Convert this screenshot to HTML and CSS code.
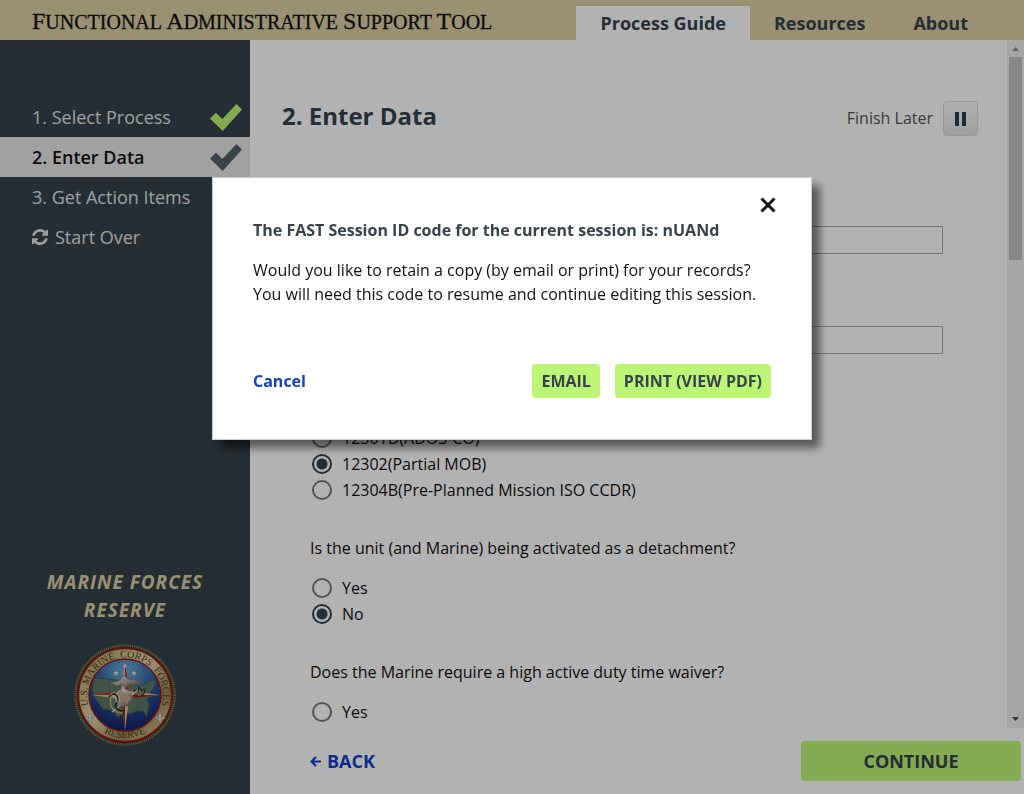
FILE: index.html
```html
<!DOCTYPE html>
<html lang="en">
<head>
<meta charset="utf-8">
<meta name="viewport" content="width=device-width, initial-scale=1">
<title>Functional Administrative Support Tool</title>
<link rel="stylesheet" href="styles.css">
</head>
<body>
<header class="topbar">
  <div class="brand"><span class="cap">F</span>unctional <span class="cap">A</span>dministrative <span class="cap">S</span>upport <span class="cap">T</span>ool</div>
  <nav class="tabs">
    <a class="tab tab-active" href="#guide">Process Guide</a>
    <a class="tab" href="#resources">Resources</a>
    <a class="tab" href="#about">About</a>
  </nav>
</header>
<div class="layout">
  <aside class="sidebar">
    <nav class="steps">
      <a class="step" href="#select">1. Select Process
        <svg class="check check-done" viewBox="0 0 32 27" aria-hidden="true"><path d="M0 14.500 6 8.700 12.300 15 26.500 0 32 5.500 12.700 27Z"/></svg></a>
      <a class="step step-active" href="#enter">2. Enter Data
        <svg class="check" viewBox="0 0 32 27" aria-hidden="true"><path d="M0 14.500 6 8.700 12.300 15 26.500 0 32 5.500 12.700 27Z"/></svg></a>
      <a class="step" href="#items">3. Get Action Items</a>
      <a class="step step-restart" href="#restart"><svg class="refresh" viewBox="0 0 1536 1536" aria-hidden="true"><path d="M1511 928q0 5-1 7-64 268-268 434.500T764 1536q-146 0-282.500-55T238 1324l-129 129q-19 19-45 19t-45-19-19-45V960q0-26 19-45t45-19h448q26 0 45 19t19 45-19 45l-137 137q71 66 161 102t187 36q134 0 250-65t186-179q11-17 53-117 8-23 30-23h192q13 0 22.500 9.500t9.500 22.500zm25-800v448q0 26-19 45t-45 19h-448q-26 0-45-19t-19-45 19-45l138-138Q969 256 768 256q-134 0-250 65T332 500q-11 17-53 117-8 23-30 23H50q-13 0-22.500-9.500T18 608v-7q65-268 270-434.500T768 0q146 0 284 55.500T1297 212l130-129q19-19 45-19t45 19 19 45z"/></svg>Start Over</a>
    </nav>
    <div class="unit">
      <p class="unit-name">MARINE FORCES RESERVE</p>
      <svg class="seal" viewBox="0 0 102 102" role="img" aria-label="U.S. Marine Corps Forces Reserve seal">
        <defs>
          <radialGradient id="sky" cx=".5" cy=".15" r=".85"><stop offset="0" stop-color="#6eb0e0"/><stop offset=".5" stop-color="#285b9c"/><stop offset="1" stop-color="#151f66"/></radialGradient>
          <linearGradient id="gold" x1="0" y1="0" x2="1" y2="1"><stop offset="0" stop-color="#a3935f"/><stop offset=".25" stop-color="#c5b880"/><stop offset=".45" stop-color="#e0d7a6"/><stop offset=".7" stop-color="#9c8658"/><stop offset="1" stop-color="#e0d49e"/></linearGradient>
          <linearGradient id="metal" x1="0" y1="0" x2="1" y2="1"><stop offset="0" stop-color="#fff"/><stop offset=".5" stop-color="#b3aaa6"/><stop offset="1" stop-color="#574536"/></linearGradient>
          <path id="arc-top" d="M14.500 62A38 38 0 1 1 87.500 62"/>
          <path id="arc-bottom" d="M21 82A43.500 43.500 0 0 0 81 82"/>
          <path id="star" d="M0-4 1-1.200 4-1.200 1.600.600 2.500 3.500 0 1.700-2.500 3.500-1.600.600-4-1.200-1-1.200Z"/>
          <path id="lily" d="M0-5C3-2 1 0 1 1 3-3 5-1 4 1L1 2 2 5 0 4-2 5-1 2-4 1C-5-1-3-3-1 1-1 0-3-2 0-5Z"/>
        </defs>
        <circle cx="51" cy="51" r="49.500" fill="#3c3522" stroke="#8f8555" stroke-width="2.500" stroke-dasharray="1.200 1"/>
        <circle cx="51" cy="51" r="46.500" fill="url(#gold)" stroke="#a3141a" stroke-width="1.500"/>
        <circle cx="51" cy="51" r="36" fill="url(#sky)" stroke="#9c171c" stroke-width="1.500"/>
        <path d="M20 34 35 35 47 37 58 39 66 43 72 39 78 36 82 37 80 43 76 49 73 54 75 60 73 73 69 67 62 67 57 70 51 69 44 73 39 67 29 65 21 54 18 44Z" fill="#5f7769" stroke="#42594d"/>
        <path d="M25 35 27 63M35 35 36 66M46 37 46 69M64 43 64 67M20 48H75" stroke="#556e61" stroke-width=".7"/>
        <path d="M51 17 55 47 86 51 55 55 51 86 47 55 17 51 47 47Z" fill="#d9c58f"/>
        <path d="M51 17V51L55 47ZM86 51H51L55 55ZM51 86V51L47 55ZM17 51H51L47 47Z" fill="#a12a20"/>
        <path d="M34 40 46 36 50 31 54 35 68 37 65 39 67 40 60 41 56 40 52 44 47 40 43 42 40 40Z" fill="url(#metal)" stroke="#6c6767" stroke-width=".6"/>
        <path d="M38 51C34 61 37 67 48 69" fill="none" stroke="#cbb073" stroke-width="1.500"/>
        <path d="M60 46 64 48 65 43 68 47 71 45 70 50 66 53 61 51Z" fill="#8e795a" stroke="#30271f"/>
        <path d="M38 68 64 46" stroke="#d9d4cc" stroke-width="1.200"/>
        <circle cx="50" cy="54" r="9" fill="url(#metal)"/>
        <path d="M46 46C51 48 48 51 54 50L57 55 53 60 49 57 45 60 42 53Z" fill="#b9a98a"/>
        <path d="M35 53Q40 47 43 52T42 60Q40 67 51 67" fill="none" stroke="#302417" stroke-width="1.500"/>
        <path d="M36 51Q41 46 44 51T43 59" fill="none" stroke="#e4ddd0" stroke-width="1"/>
        <g fill="#d9e5ee" stroke="#4e6170" stroke-width=".5"><use href="#star" x="51" y="22"/><use href="#star" x="42" y="29"/><use href="#star" x="60" y="29"/></g>
        <g fill="#e3e1dc" stroke="#807d76" stroke-width=".5"><use href="#lily" x="16" y="74"/><use href="#lily" x="86" y="74"/></g>
        <g class="seal-text"><text><textPath href="#arc-top" startOffset="50%" text-anchor="middle">U.S. MARINE&#160; CORPS&#160; FORCES</textPath></text>
        <text><textPath href="#arc-bottom" startOffset="50%" text-anchor="middle">RESERVE</textPath></text></g>
      </svg>
    </div>
  </aside>
  <main class="content">
    <div class="viewport">
      <div class="scroll-body">
        <div class="page-head">
          <h1 class="title">2. Enter Data</h1>
          <label class="finish-label" for="finish">Finish Later</label>
          <button class="pause" id="finish" type="button"><svg class="pause-icon" viewBox="0 0 12 14" aria-hidden="true"><path d="M0 0h4v14H0zM7 0h4v14H7z"/></svg></button>
        </div>
        <form class="form">
          <div class="fields">
            <input class="field" type="text" aria-label="First entry">
            <input class="field" type="text" aria-label="Second entry">
          </div>
          <fieldset class="group" aria-label="Orders type">
            <label class="option"><input class="radio" type="radio" name="orders">12301D(ADOS-CO)</label>
            <label class="option"><input class="radio" type="radio" name="orders" checked>12302(Partial MOB)</label>
            <label class="option"><input class="radio" type="radio" name="orders">12304B(Pre-Planned Mission ISO CCDR)</label>
          </fieldset>
          <fieldset class="group">
            <legend class="question">Is the unit (and Marine) being activated as a detachment?</legend>
            <label class="option"><input class="radio" type="radio" name="detachment">Yes</label>
            <label class="option"><input class="radio" type="radio" name="detachment" checked>No</label>
          </fieldset>
          <fieldset class="group">
            <legend class="question">Does the Marine require a high active duty time waiver?</legend>
            <label class="option"><input class="radio" type="radio" name="waiver">Yes</label>
          </fieldset>
        </form>
      </div>
      <div class="scrollbar" aria-hidden="true">
        <svg class="arrow" viewBox="0 0 17 17"><path d="M5 11h7L8.500 7z" fill="#8b8b8b"/></svg>
        <div class="track"><div class="thumb"></div></div>
        <svg class="arrow" viewBox="0 0 17 17"><path d="M5 6h7l-3.500 4z" fill="#505050"/></svg>
      </div>
    </div>
    <div class="actions">
      <a class="back" href="#back"><svg class="back-icon" viewBox="0 0 11 11" aria-hidden="true"><path d="M6 1 1.500 5.500 6 10M2 5.500h9" fill="none" stroke="currentColor" stroke-width="2.200"/></svg>BACK</a>
      <button class="continue" type="button">CONTINUE</button>
    </div>
  </main>
</div>
<div class="backdrop">
  <section class="dialog" role="dialog" aria-modal="true" aria-labelledby="dialog-title">
    <button class="close" type="button" aria-label="Close"><svg class="close-icon" viewBox="0 0 16 16" aria-hidden="true"><path d="M1.500 1.500 14.500 14.500M14.500 1.500 1.500 14.500" stroke="#111" stroke-width="3"/></svg></button>
    <h2 class="dialog-title" id="dialog-title">The FAST Session ID code for the current session is: nUANd</h2>
    <p class="dialog-text">Would you like to retain a copy (by email or print) for your records?<br>You will need this code to resume and continue editing this session.</p>
    <div class="dialog-actions">
      <a class="cancel" href="#cancel">Cancel</a>
      <button class="btn" type="button">EMAIL</button>
      <button class="btn" type="button">PRINT (VIEW PDF)</button>
    </div>
  </section>
</div>
</body>
</html>
```
FILE: styles.css
```css
* { box-sizing: border-box; }
body {
  margin: 0;
  height: 100vh;
  display: flex;
  flex-direction: column;
  overflow: hidden;
  font: 16px/24px "Open Sans", sans-serif;
  color: #111;
  background: #fff;
}
a { text-decoration: none; }
button { font: inherit; cursor: pointer; }

.topbar {
  display: flex;
  justify-content: space-between;
  align-items: flex-end;
  height: 40px;
  flex: none;
  padding: 0 32px;
  background: #dcd0a4;
}
.brand {
  font: 20px/36px "Liberation Serif", serif;
  -webkit-text-stroke: 0.3px #111;
  text-transform: uppercase;
  white-space: nowrap;
}
.brand .cap { font-size: 24px; }
.tabs { display: flex; }
.tab {
  padding: 0 24px;
  font-size: 18px;
  font-weight: 700;
  line-height: 34px;
  color: #36424c;
}
.tab-active { background: #fff; }

.layout { display: flex; flex: 1; min-height: 0; }
.sidebar {
  width: 250px;
  flex: none;
  display: flex;
  flex-direction: column;
  justify-content: space-between;
  padding: 57px 0 48px;
  background: #36424c;
}
.step {
  display: flex;
  align-items: center;
  justify-content: space-between;
  height: 40px;
  padding: 0 8px 0 32px;
  font-size: 18px;
  color: #e4e4e4;
}
.step-active { background: #e7e7e7; color: #111; font-weight: 600; }
.step-restart { justify-content: flex-start; gap: 7px; }
.check { width: 32px; height: 27px; fill: #536067; }
.check-done { fill: #bcf575; }
.refresh { width: 16px; height: 16px; fill: #e4e4e4; }
.unit { text-align: center; }
.unit-name {
  margin: 0 40px 20px;
  font-size: 19px;
  font-style: italic;
  font-weight: 700;
  line-height: 28px;
  letter-spacing: 1px;
  color: #dcd0a4;
}
.seal { display: block; width: 102px; height: 102px; margin: 0 auto; }
.seal-text { font: 10px "Liberation Serif", serif; fill: #4b3c20; }

.content { flex: 1; min-width: 0; display: flex; flex-direction: column; }
.viewport { flex: 1; min-height: 0; display: flex; }
.scroll-body { flex: 1; overflow: hidden; padding: 61px 29px 0 32px; }
.page-head { display: flex; align-items: flex-start; gap: 10px; height: 35px; }
.title {
  flex: 1;
  margin: 0;
  font-size: 24px;
  font-weight: 700;
  line-height: 30px;
  color: #36424c;
}
.finish-label { line-height: 34px; color: #555; }
.pause {
  display: grid;
  place-items: center;
  width: 35px;
  height: 35px;
  padding: 0;
  border: 1px solid #dadada;
  border-radius: 4px;
  background: linear-gradient(#fcfcfc, #e6e6e3);
}
.pause-icon { width: 12px; height: 14px; fill: #303a50; }
.form { padding: 90px 35px 0 28px; }
.fields { display: grid; gap: 72px; margin-bottom: 71px; }
.field {
  width: 100%;
  height: 28px;
  border: 1px solid #a9a9a9;
  background: #fff;
  font: inherit;
}
.group { margin: 0 0 33px; padding: 0; border: 0; min-width: 0; }
.question { padding: 0; margin-bottom: 15px; }
.option { display: flex; align-items: center; gap: 10px; height: 26px; }
.radio {
  appearance: none;
  flex: none;
  width: 20px;
  height: 20px;
  margin: 0 0 0 2px;
  border: 2px solid #777;
  border-radius: 50%;
  background: #fff;
}
.radio:checked {
  border-color: #36424c;
  background: radial-gradient(circle, #36424c 5px, #fff 6px);
}
.scrollbar { width: 17px; flex: none; display: flex; flex-direction: column; background: #eee; }
.arrow { width: 17px; height: 17px; flex: none; }
.track { flex: 1; padding: 0 2px; }
.thumb { height: 31%; background: #c0c0c0; }

.actions {
  display: flex;
  align-items: center;
  justify-content: space-between;
  height: 66px;
  padding: 0 3px 0 60px;
}
.back {
  display: flex;
  align-items: center;
  gap: 6px;
  font-size: 18px;
  font-weight: 700;
  color: #1340c4;
}
.back-icon { width: 11px; height: 11px; }
.continue {
  width: 220px;
  height: 40px;
  border: 0;
  border-radius: 4px;
  background: #bcf575;
  font-size: 18px;
  font-weight: 700;
  color: #36424c;
}

.backdrop {
  position: fixed;
  inset: 0;
  display: flex;
  justify-content: center;
  align-items: flex-start;
  padding-top: 177px;
  background: rgba(0, 0, 0, 0.3);
}
.dialog {
  position: relative;
  width: 600px;
  max-width: 100%;
  padding: 40px 40px 41px;
  border: 1px solid #ccc;
  background: #fff;
  box-shadow: 8px 8px 8px rgba(0, 0, 0, 0.5);
}
.close {
  position: absolute;
  top: 15px;
  right: 31px;
  display: grid;
  place-items: center;
  width: 24px;
  height: 24px;
  padding: 0;
  border: 0;
  background: none;
}
.close-icon { width: 16px; height: 16px; }
.dialog-title { margin: 0 0 16px; font-size: 16px; font-weight: 700; line-height: 24px; color: #36424c; }
.dialog-text { margin: 0 0 58px; }
.dialog-actions { display: flex; align-items: center; gap: 15px; }
.cancel { margin-right: auto; font-weight: 700; color: #1340c4; }
.btn {
  height: 34px;
  padding: 0 9px;
  border: 0;
  border-radius: 4px;
  background: #bcf575;
  font-weight: 700;
  color: #36424c;
}
```
